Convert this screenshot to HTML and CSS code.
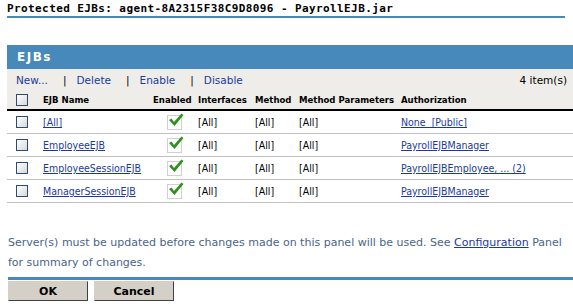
FILE: index.html
```html
<!DOCTYPE html>
<html>
<head>
  <title>Protected EJBs</title>
  <link rel="stylesheet" href="styles.css">
</head>
<body>
  <div class="page-title">Protected EJBs: agent-8A2315F38C9D8096 - PayrollEJB.jar</div>

  <div class="panel">
    <div class="panel-head">EJBs</div>
    <div class="toolbar">
      <div class="actions"><a href="#">New...</a><span class="sep">|</span><a href="#">Delete</a><span class="sep">|</span><a href="#">Enable</a><span class="sep">|</span><a href="#">Disable</a></div>
      <div class="count">4 item(s)</div>
    </div>

    <table class="grid">
      <colgroup>
        <col class="w-check">
        <col class="w-name">
        <col class="w-enabled">
        <col class="w-if">
        <col class="w-method">
        <col class="w-params">
        <col>
      </colgroup>
      <thead>
        <tr>
          <th class="col-check"><span class="box"></span></th>
          <th>EJB Name</th>
          <th>Enabled</th>
          <th>Interfaces</th>
          <th>Method</th>
          <th>Method Parameters</th>
          <th>Authorization</th>
        </tr>
      </thead>
      <tbody>
        <tr>
          <td class="col-check"><span class="box"></span></td>
          <td><a href="#">[All]</a></td>
          <td><span class="tick"><svg width="16" height="14" viewBox="0 0 16 14"><path d="M1 7 L3.5 5.5 L6 9 L13.5 0.5 L15.5 2 L6.5 13 Z" fill="#2f8f1f"/></svg></span></td>
          <td>[All]</td>
          <td>[All]</td>
          <td>[All]</td>
          <td><a href="#">None&nbsp;&nbsp;[Public]</a></td>
        </tr>
        <tr>
          <td class="col-check"><span class="box"></span></td>
          <td><a href="#">EmployeeEJB</a></td>
          <td><span class="tick"><svg width="16" height="14" viewBox="0 0 16 14"><path d="M1 7 L3.5 5.5 L6 9 L13.5 0.5 L15.5 2 L6.5 13 Z" fill="#2f8f1f"/></svg></span></td>
          <td>[All]</td>
          <td>[All]</td>
          <td>[All]</td>
          <td><a href="#">PayrollEJBManager</a></td>
        </tr>
        <tr>
          <td class="col-check"><span class="box"></span></td>
          <td><a href="#">EmployeeSessionEJB</a></td>
          <td><span class="tick"><svg width="16" height="14" viewBox="0 0 16 14"><path d="M1 7 L3.5 5.5 L6 9 L13.5 0.5 L15.5 2 L6.5 13 Z" fill="#2f8f1f"/></svg></span></td>
          <td>[All]</td>
          <td>[All]</td>
          <td>[All]</td>
          <td><a href="#">PayrollEJBEmployee, ... (2)</a></td>
        </tr>
        <tr>
          <td class="col-check"><span class="box"></span></td>
          <td><a href="#">ManagerSessionEJB</a></td>
          <td><span class="tick"><svg width="16" height="14" viewBox="0 0 16 14"><path d="M1 7 L3.5 5.5 L6 9 L13.5 0.5 L15.5 2 L6.5 13 Z" fill="#2f8f1f"/></svg></span></td>
          <td>[All]</td>
          <td>[All]</td>
          <td>[All]</td>
          <td><a href="#">PayrollEJBManager</a></td>
        </tr>
      </tbody>
    </table>

    <p class="note">Server(s) must be updated before changes made on this panel will be used. See <a href="#">Configuration</a> Panel for summary of changes.</p>
  </div>

  <div class="buttons">
    <button class="btn">OK</button>
    <button class="btn">Cancel</button>
  </div>
</body>
</html>
```

FILE: styles.css
```css
body {
  margin: 0;
  font-family: "DejaVu Sans", Verdana, sans-serif;
  font-size: 11px;
  color: #000;
  background-color: #fff;
  overflow: hidden;
}

a {
  color: #1a3a9c;
}

.page-title {
  margin: 0 8px 0 7px;
  padding-top: 2px;
  height: 14px;
  font-family: "DejaVu Sans Mono", monospace;
  font-weight: bold;
  font-size: 11px;
  letter-spacing: 0.4px;
  border-bottom: 2px solid #4689ba;
}

.panel {
  margin: 27px 0 0 7px;
}

.panel-head {
  height: 24px;
  line-height: 24px;
  padding-left: 10px;
  background-color: #4689ba;
  color: #fff;
  font-weight: bold;
  font-size: 12px;
  letter-spacing: 1.5px;
}

.toolbar {
  display: flex;
  justify-content: space-between;
  align-items: center;
  height: 22px;
  padding: 0 6px 0 9px;
  background-color: #eeede9;
  font-size: 10.5px;
}

.actions a {
  text-decoration: none;
}

.sep {
  margin: 0 10px 0 15px;
}

.grid {
  width: 100%;
  table-layout: fixed;
  border-collapse: collapse;
}

.w-check { width: 32px; }
.w-name { width: 110px; }
.w-enabled { width: 45px; }
.w-if { width: 57px; }
.w-method { width: 44px; }
.w-params { width: 102px; }

.grid th {
  height: 18px;
  padding: 0 4px;
  line-height: 14px;
  text-align: left;
  font-family: "DejaVu Sans Condensed", "DejaVu Sans", sans-serif;
  font-size: 9.5px;
  background-color: #eeede9;
  border-bottom: 2px solid #000;
  white-space: nowrap;
}

.grid td {
  height: 22px;
  padding: 0 4px;
  line-height: 14px;
  border-bottom: 1px solid #c0c0c0;
  white-space: nowrap;
  font-family: "DejaVu Sans Condensed", "DejaVu Sans", sans-serif;
  font-size: 10.5px;
}

.grid .col-check {
  padding-left: 9px;
}

.box {
  display: block;
  width: 10px;
  height: 10px;
  border: 1px solid #2e4d6e;
  background: linear-gradient(135deg, #fff, #d8d8d8);
}

.tick {
  display: inline-block;
  vertical-align: middle;
  width: 13px;
  height: 13px;
  margin-left: 14px;
  border: 1px solid #d0d0d0;
  position: relative;
}

.tick svg {
  position: absolute;
  left: 0;
  top: -3px;
}

.note {
  margin: 30px 0 0 1px;
  line-height: 20px;
  color: #4a6586;
  font-size: 11px;
  border-bottom: 3px solid #4689ba;
  padding-bottom: 4px;
}

.buttons {
  display: flex;
  gap: 6px;
  margin: 1px 0 0 8px;
}

.btn {
  width: 80px;
  height: 20px;
  padding: 0;
  font-family: "DejaVu Sans", sans-serif;
  font-size: 11px;
  font-weight: bold;
  background-color: #d4d0c8;
  border: 1px solid #d4d0c8;
  border-right-color: #404040;
  border-bottom-color: #404040;
}
```
